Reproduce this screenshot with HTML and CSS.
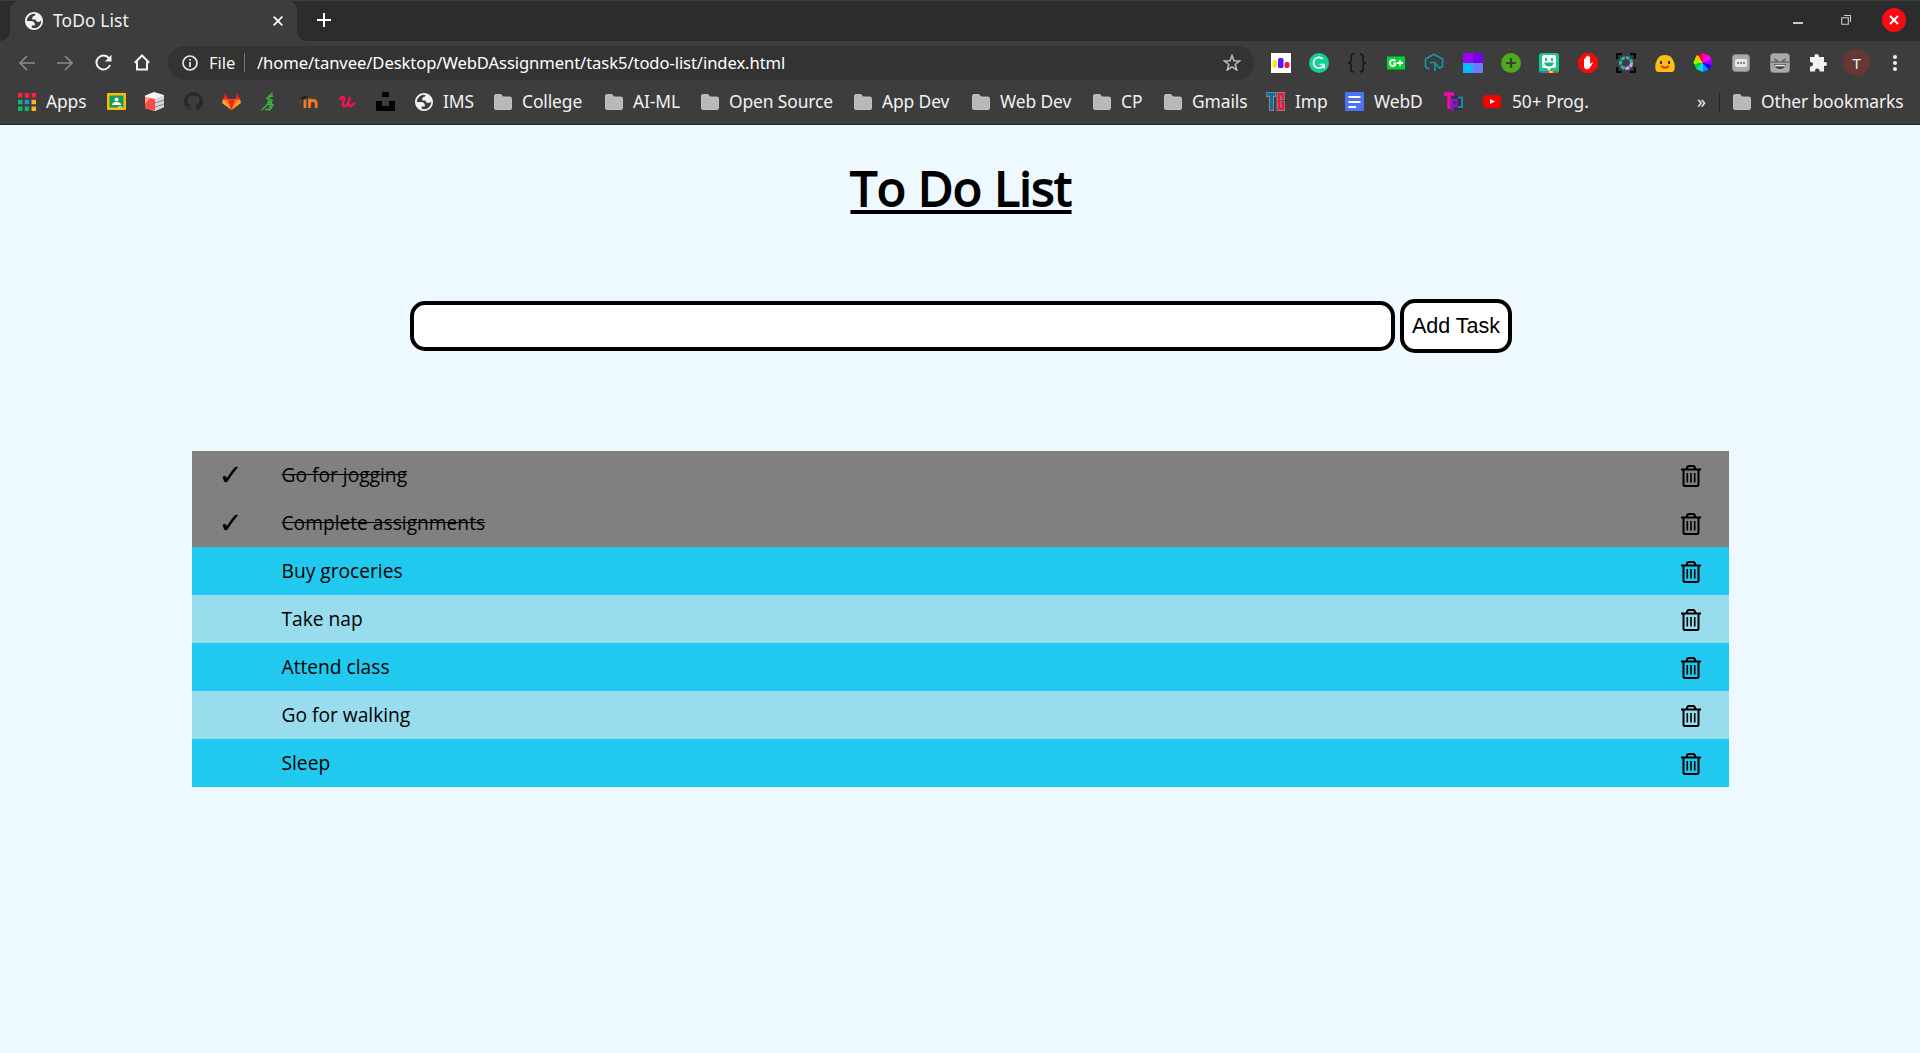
FILE: index.html
```html
<!DOCTYPE html>
<html lang="en">
<head>
<meta charset="utf-8">
<title>ToDo List</title>
<link rel="stylesheet" href="styles.css">
</head>
<body>
<svg class="defs" width="0" height="0" aria-hidden="true">
  <symbol id="folder" viewBox="0 0 18 16"><path d="M.5 2Q.5.5 2 .5h5L9 3h7q1.500 0 1.500 1.500V14q0 1.500-1.500 1.500H2Q.5 15.500.5 14z" fill="#b8b8b8" stroke="#d0d0d0" stroke-width=".8"/></symbol>
  <symbol id="globe" viewBox="2 2 20 20"><path fill="#f2f2f2" fill-rule="evenodd" d="M12 2C6.480 2 2 6.480 2 12s4.480 10 10 10 10-4.480 10-10S17.520 2 12 2zM4 12h4.400c3.407.022 4.922 1.730 4.543 5.127H9.488v2.470a8.004 8.004 0 0 0 10.498-8.083C19.327 12.504 18.332 13 17 13c-2.137 0-3.206-.916-3.206-2.750h-3.748c-.274-2.728.683-4.092 2.870-4.092 0-.975.327-1.597.811-1.970A8.004 8.004 0 0 0 4 12z"/></symbol>
  <symbol id="trash" viewBox="0 0 20 22"><path d="M0 4.500h20M5.500 4l1-2.200Q6.900 1 7.800 1h4.400q.9 0 1.300.8L14.500 4M2.500 5v14.500q0 1.500 1.500 1.500h12q1.500 0 1.500-1.500V5" fill="none" stroke="#000" stroke-width="2"/><path d="M6.300 8v9.500M10 8v9.500M13.700 8v9.500" stroke="#000" stroke-width="1.600"/></symbol>
</svg>
<header class="browser">
  <div class="tabs">
    <div class="edge"></div>
    <div class="tab">
      <svg class="i18"><use href="#globe"/></svg><span class="tab-title">ToDo List</span>
      <svg class="tab-close" viewBox="0 0 10 10"><path d="M.7.700l8.600 8.600M9.300.700.7 9.300" stroke="#fff" stroke-width="1.700"/></svg>
    </div>
    <div class="strip">
      <svg width="14" height="14"><path d="M7 0v14M0 7h14" stroke="#fff" stroke-width="2"/></svg>
      <div class="controls">
        <svg width="10" height="24"><path d="M0 15h10" stroke="#c8c8c8" stroke-width="2"/></svg>
        <svg width="10" height="10"><path d="M.7 2.700h6.600v6.600H.7zM3 .5h6.500V7" fill="none" stroke="#ccc" stroke-width="1.100"/></svg>
        <svg width="24" height="24"><circle cx="12" cy="12" r="12" fill="#f80b12"/><path d="m8 8 8 8m0-8-8 8" stroke="#fff" stroke-width="2"/></svg>
      </div>
    </div>
  </div>

  <div class="toolbar">
    <div class="nav">
      <svg width="16" height="16"><path d="M16 8H1.500M8 1 1 8l7 7" fill="none" stroke="#8a8a8a" stroke-width="1.600"/></svg>
      <svg width="16" height="16"><path d="M0 8h14.500M8 1l7 7-7 7" fill="none" stroke="#8a8a8a" stroke-width="1.600"/></svg>
      <svg width="17" height="17"><path d="M14 4.200A7 7 0 1 0 15 11" fill="none" stroke="#f2f2f2" stroke-width="2"/><path d="M16.500.8v6.700H9.800z" fill="#f2f2f2"/></svg>
      <svg width="16" height="17"><path d="M3 7.500V15.500h10V7.500M.8 8.700 8 1.500l7.200 7.200M1 8.300h2.500M12.500 8.300H15" fill="none" stroke="#f2f2f2" stroke-width="2"/></svg>
    </div>
    <div class="omnibox">
      <svg width="16" height="16"><circle cx="8" cy="8" r="7" fill="none" stroke="#e5e5e5" stroke-width="1.700"/><path d="M8 7v5M8 4v1.800" stroke="#e5e5e5" stroke-width="1.800"/></svg>
      <span class="scheme">File</span><i></i><span class="url">/home/tanvee/Desktop/WebDAssignment/task5/todo-list/index.html</span>
      <svg class="star" width="18" height="17"><path d="m9 1.500 2 5.200 5.500.3-4.300 3.500 1.500 5.400L9 12.900l-4.700 3 1.500-5.400L1.500 7 7 6.700z" fill="none" stroke="#bbb" stroke-width="1.600"/></svg>
    </div>
    <div class="extensions">
      <svg viewBox="0 0 20 20"><path fill="#fff" d="M0 0h20v20H0z"/><rect x="1.500" y="7" width="4.500" height="8" rx="2" fill="#f4ee20"/><rect x="7" y="5" width="5.500" height="10" rx="1.500" fill="#5d19ee"/><rect x="13.500" y="9" width="5" height="6" rx="2" fill="#ef1739"/></svg>
      <svg viewBox="0 0 20 20"><circle cx="10" cy="10" r="10" fill="#13cf96"/><path d="M13.700 6A5.400 5.400 0 1 0 15 11.500M10.500 11.500h4.700v4" fill="none" stroke="#fff" stroke-width="1.700"/></svg>
      <svg viewBox="0 0 20 20"><path d="M7 1Q4 1 4 4v3.500Q4 10 1 10q3 0 3 2.500V16q0 3 3 3M13 1q3 0 3 3v3.500q0 2.500 3 2.500-3 0-3 2.500V16q0 3-3 3" fill="none" stroke="#171717" stroke-width="1.600"/></svg>
      <svg viewBox="0 0 20 20"><path fill="#00d632" d="M1 3.500h18v13H1z"/><path d="M9.500 8Q8.500 7 7 7q-3 0-3 3t3 3q2.500 0 2.500-2.500H7.300M11 10h6M14 7v6" fill="none" stroke="#fff" stroke-width="1.800"/></svg>
      <svg viewBox="0 0 20 20"><path d="m5 16-3.500-2V6L10 1.200 18.500 6v7.500l-3 1.500-5-5.500M6 9.500h5V18" fill="none" stroke="#1599a8" stroke-width="1.600"/></svg>
      <svg viewBox="0 0 20 20"><path fill="#a000f5" d="M0 0h10v10H0z"/><path fill="#7600e8" d="M10 0h10v10H10z"/><path fill="#05baff" d="M0 10h10v10H0z"/><path fill="#6d7cff" d="M10 10h10v10H10z"/></svg>
      <svg viewBox="0 0 20 20"><circle cx="10" cy="10" r="10" fill="#50a81b"/><path d="M10 5v10M5 10h10" stroke="#31432c" stroke-width="2.200"/></svg>
      <svg viewBox="0 0 20 20"><rect width="20" height="20" rx="3" fill="#16c98c"/><path d="M1.500 19H6" stroke="#2c7de0" stroke-width="2"/><path d="M6 19h4" stroke="#e83e4c" stroke-width="2"/><path d="M10 19h4" stroke="#ffcb25" stroke-width="2"/><path d="M14 19h4" stroke="#e83e2c" stroke-width="2"/><path d="M5 2h10q2 0 2 2v9q0 2-2 2h-3l-2 3-2-3H5q-2 0-2-2V4q0-2 2-2z" fill="#fff"/><path fill="#16b982" d="M6 5h2v3H6zm6 0h2v3h-2zM5 9.500h10q-1 4-5 4t-5-4"/></svg>
      <svg viewBox="0 0 20 20"><path fill="#f80a0a" d="M6 0h8l6 6v8l-6 6H6l-6-6V6z"/><path d="M6 13V6q1-1 1.500 0V4q1-1 1.500 0V3q1-1 1.600 0V4q1-1 1.500 0v7l2-1.700q1.300 0 .6 1l-3.200 5q-1.500 1.500-4 .7Q6 15.500 6 13z" fill="#fff"/></svg>
      <svg viewBox="0 0 20 20"><path d="M1 6V1h5M14 1h5v5M19 14v5h-5M6 19H1v-5" fill="none" stroke="#080808" stroke-width="2.500"/><circle cx="10" cy="10" r="5.500" fill="none" stroke="#29b0b2" stroke-width="3" stroke-dasharray="4 1"/><path d="M15.500 10A5.500 5.500 0 0 1 8 15" fill="none" stroke="#c9a0e0" stroke-width="3" stroke-dasharray="4 1"/></svg>
      <svg viewBox="0 0 20 20"><path fill="#fdbd17" d="M1 18Q-1 12 2 7 4 2 10 2t8 5q3 5 1 11-1 1-3 1H4q-2 0-3-1z"/><path fill="#333" d="M5 8h2v3H5zm8 0h2v3h-2z"/><path d="M6 13q4 3.500 8 0" stroke="#e43427" stroke-width="2" fill="none"/></svg>
      <div class="wheel"></div>
      <svg viewBox="0 0 20 20"><rect x="1.500" y="1.500" width="17" height="17" rx="3" fill="#aaa" stroke="#888"/><rect x="4" y="6" width="12" height="8" rx="2" fill="#e8e8e8"/><path d="M6 10h8" stroke="#888" stroke-width="2" stroke-dasharray="2 1"/></svg>
      <svg viewBox="0 0 20 20"><rect x=".5" y=".5" width="19" height="19" rx="3" fill="#aaa" stroke="#888"/><path d="m4 6 4 2M16 6l-4 2M1 9h18" stroke="#666" stroke-width="1.500"/><path d="M4 11h12q-1 5-6 5t-6-5" fill="#444"/><path d="M5 12.500h10" stroke="#eee" stroke-width="1.500"/></svg>
      <svg viewBox="0 0 20 20"><path fill="#f2f2f2" d="M2 4h4.500Q6 1 8.500 1T11 4h5v5q3-.5 3 2t-3 2v5.500h-4.500q.3-3-2.200-3t-2.200 3H2v-5q3 .2 3-2.200T2 9z"/></svg>
      <div class="avatar">T</div>
      <svg viewBox="0 0 20 20"><g fill="#f2f2f2"><circle cx="10" cy="4" r="2"/><circle cx="10" cy="10" r="2"/><circle cx="10" cy="16" r="2"/></g></svg>
    </div>
  </div>

  <div class="bookmarks">
    <div><svg class="i18" viewBox="0 0 18 18"><path fill="#fb1f41" d="M0 0h4.500v4.500H0zM6.700 0h4.500v4.500H6.700zM13.500 0H18v4.500h-4.500z"/><path fill="#0cb965" d="M0 6.700h4.500v4.500H0zM0 13.500h4.500V18H0zM6.700 13.500h4.500V18H6.700z"/><path fill="#188ef5" d="M6.700 6.700h4.500v4.500H6.700z"/><path fill="#fdb616" d="M13.500 6.700H18v4.500h-4.500zM13.500 13.500H18V18h-4.500z"/></svg><span>Apps</span></div>
    <div><svg viewBox="0 0 19 19"><rect y="1" width="19" height="17" rx="1" fill="#f9bd05"/><path fill="#149e5b" d="M2.500 3.500h14v12h-14z"/><circle cx="9.500" cy="7.500" r="2" fill="#fff"/><path d="M5 13q0-3 4.500-3t4.500 3z" fill="#fff"/><path d="M11 15h4" stroke="#fff"/></svg></div>
    <div><svg viewBox="0 0 19 19"><path fill="#f4f4f4" d="m0 3.500 9-3.500 10 3v12l-9 4-10-3z"/><path fill="#d5d5d5" d="M10 7 19 3v12l-9 4z"/><path fill="#ff4a45" d="m0 5 10 2v12L0 16z"/><path fill="#ff9a80" d="m0 5 5 1-5 6z"/><path d="m10 11 9-3M10 15l9-3" stroke="#888" fill="none"/></svg></div>
    <div><svg viewBox="0 0 19 19"><path fill="#24292e" d="M6.500 18.300C3 17 0 13.700 0 9.500a9.500 9.500 0 0 1 19 0c0 4.200-3 7.500-6.500 8.800v-3.500q0-1.300-.8-2 4-.5 4-4.500 0-1.500-1-2.600.4-1.200-.1-2.500-1.200 0-2.700 1-2.400-.7-4.800 0-1.500-1-2.700-1-.5 1.300-.1 2.500-1 1.100-1 2.600 0 4 4 4.500-.7.700-.8 1.700-2 .7-3-1-1-1.200-1.500-.5 1 .5 1.500 2 1 1.500 3 1z"/></svg></div>
    <div><svg viewBox="0 0 19 19"><path fill="#fca326" d="M1 7h17l1 4-9.500 7L0 11z"/><path fill="#fc6d26" d="M2 7h15L9.500 18z"/><path fill="#f0251c" d="m1 7.500 2.500-6.500L6 7.500zM13 7.500 15.500 1 18 7.500zM6 7.500h7L9.500 18z"/></svg></div>
    <div><svg viewBox="0 0 19 19"><path d="M12.500 1 7 6.500l5 1.500-5 5-5.500 5M8 5l5-1M9 8l-1 4 5 1-3 4.500H5M12 10l-3 6" fill="none" stroke="#3eb83b" stroke-width="1.500"/></svg></div>
    <div><svg viewBox="0 0 19 19"><path d="m0 6 5-2 4 0-4 4z" fill="#24201e"/><path d="M1.300 7v5" stroke="#6b4630"/><path d="M6 7.500V16M10.500 16V6.500M10.500 11q0-2.500 3.300-2.500T17.200 11v5" fill="none" stroke="#f27b22" stroke-width="2.800"/></svg></div>
    <div><svg viewBox="0 0 19 19"><path d="M2 7q4-4 4 0l-1 4q-.5 4 2 3.300 3-1 5-9.300l-1.400 6q-.5 3.500 2 3 2-.5 3.500-2.500" fill="none" stroke="#ed1651" stroke-width="2.600" stroke-linecap="round"/></svg></div>
    <div><svg viewBox="0 0 19 19"><path d="M6 0h7v5H6zM0 9h6v5h7V9h6v10H0z"/></svg></div>
    <div><svg class="i18"><use href="#globe"/></svg><span>IMS</span></div>
    <div><svg class="folder"><use href="#folder"/></svg><span>College</span></div>
    <div><svg class="folder"><use href="#folder"/></svg><span>AI-ML</span></div>
    <div><svg class="folder"><use href="#folder"/></svg><span>Open Source</span></div>
    <div><svg class="folder"><use href="#folder"/></svg><span>App Dev</span></div>
    <div><svg class="folder"><use href="#folder"/></svg><span>Web Dev</span></div>
    <div><svg class="folder"><use href="#folder"/></svg><span>CP</span></div>
    <div><svg class="folder"><use href="#folder"/></svg><span>Gmails</span></div>
    <div><svg viewBox="0 0 19 19"><path fill="#888" d="M0 0h10v5H8v14H3V5H0zM10.500 0H19v8h-4v1h4v10h-8.500z"/><path fill="#086fa6" d="M.7.700h8.500v3H7V18H4V3.700H.7z"/><path d="M17 7V2.300h-4v14.400h4V11h-2" fill="none" stroke="#ef1740" stroke-width="2.600"/></svg><span>Imp</span></div>
    <div><svg viewBox="0 0 19 19"><rect width="19" height="19" rx="1" fill="#4b74f5"/><path d="M3.500 5h12M3.500 10h12M3.500 15H11" stroke="#fff" stroke-width="2"/></svg><span>WebD</span></div>
    <div><svg viewBox="0 0 19 19"><path d="M8 4h10v14H8z" fill="#343039"/><path d="M0 2h10M5 2v15" stroke="#f408ad" stroke-width="3.500"/><path d="M8.500 19V8h4v6h-3" stroke="#8a14d0" stroke-width="2.400" fill="none"/><path d="M14 5.500h4V15h-4" stroke="#168d9e" stroke-width="2" fill="none"/></svg></div>
    <div><svg viewBox="0 0 19 19"><rect y="3" width="18" height="13" rx="3" fill="#f80000"/><path fill="#fff" d="m7 7 5 2.500L7 12z"/></svg><span>50+ Prog.</span></div>
    <div class="more">»</div>
    <div class="other"><svg class="folder"><use href="#folder"/></svg><span>Other bookmarks</span></div>
  </div>
</header>

<main>
  <h1>To Do List</h1>
  <form class="entry"><input type="text" aria-label="Task"><button type="button">Add Task</button></form>
  <ul class="tasks">
    <li class="done"><b>✓</b><span>Go for jogging</span><svg><use href="#trash"/></svg></li>
    <li class="done"><b>✓</b><span>Complete assignments</span><svg><use href="#trash"/></svg></li>
    <li><b></b><span>Buy groceries</span><svg><use href="#trash"/></svg></li>
    <li><b></b><span>Take nap</span><svg><use href="#trash"/></svg></li>
    <li><b></b><span>Attend class</span><svg><use href="#trash"/></svg></li>
    <li><b></b><span>Go for walking</span><svg><use href="#trash"/></svg></li>
    <li><b></b><span>Sleep</span><svg><use href="#trash"/></svg></li>
  </ul>
</main>
</body>
</html>
```
FILE: styles.css
```css
* { box-sizing: border-box; }
html, body { height: 100%; overflow: hidden; }
body { margin: 0; background: #edf9ff; font-family: "Open Sans", sans-serif; color: #000; }
svg { display: block; flex: none; }
.defs { position: absolute; }

/* Browser window */
.browser { height: 125px; background: #3d3d3d; border-bottom: 1px solid #202326; color: #f2f2f2; font-family: "Noto Sans", sans-serif; font-size: 17.400px; letter-spacing: -.1px; white-space: nowrap; }
.tabs { height: 41px; display: flex; border-top: 1px solid #3d3d3d; }
.edge { width: 10px; background: #2c2c2c; border-bottom-right-radius: 10px; }
.tab { width: 287px; position: relative; display: flex; align-items: center; padding: 0 14px 1px 15px; }
.tab::before { content: ""; position: absolute; inset: 0 0 auto; height: 10px; z-index: 0; background: radial-gradient(circle at 10px 10px, transparent 10px, #2c2c2c 10.500px) left / 10px 10px no-repeat, radial-gradient(circle at 0 10px, transparent 10px, #2c2c2c 10.500px) right / 10px 10px no-repeat; }
.i18 { width: 18px; height: 18px; }
.tab-title { margin: 0 0 2px 10px; letter-spacing: .1px; }
.tab-close { width: 10px; height: 10px; margin-left: auto; }
.strip { flex: 1; display: flex; align-items: center; padding: 0 14px 2px 20px; background: #2c2c2c; border-bottom-left-radius: 10px; }
.controls { margin-left: auto; display: flex; align-items: center; gap: 38px; }
.controls svg:last-child { margin-left: -7px; }
.toolbar { height: 43px; display: flex; align-items: center; }
.nav { width: 168px; display: flex; align-items: center; gap: 22px; padding-left: 19px; }
.omnibox { width: 1086px; height: 34px; border-radius: 17px; background: #333; display: flex; align-items: center; padding: 0 13px 0 14px; font-size: 16.600px; letter-spacing: -.08px; }
.scheme { width: 27px; margin-left: 11px; }
.omnibox i { width: 1px; height: 19px; background: #777; margin: 0 12px 0 8px; }
.url { color: #fff; }
.star { margin-left: auto; }
.extensions { display: grid; grid-template-columns: repeat(17, 38.400px); justify-items: center; align-items: center; margin-left: 7.500px; }
.extensions svg { width: 20px; height: 20px; }
.wheel { width: 19px; height: 19px; clip-path: polygon(50% 0, 85% 15%, 100% 50%, 85% 85%, 50% 100%, 15% 85%, 0 50%, 15% 15%); background: conic-gradient(#f0a 0 30deg, #f0f 0 70deg, #90f 0 105deg, #20f 0 140deg, #08f 0 180deg, #0dd 0 220deg, #0d2 0 260deg, #9f0 0 300deg, #fb0 0 330deg, #f01 0); }
.avatar { width: 27px; height: 27px; border-radius: 50%; background: #663833; display: grid; place-items: center; font-size: 15px; }
.bookmarks { height: 36px; display: grid; align-items: center; padding-left: 18px; grid-template-columns: 89px 38px 39px 38px 38px 39px 39px 38px 39px 79px 111px 96px 153px 118px 121px 71px 102px 79px 99px 39px 214px 22px 1fr; }
.bookmarks > div { display: flex; align-items: center; }
.bookmarks svg { width: 19px; height: 19px; margin-top: -1px; }
.bookmarks svg.i18 { width: 18px; height: 18px; }
.bookmarks svg.folder { width: 18px; height: 16px; }
.bookmarks span { margin: -3px 0 0 10px; }
.bookmarks .more { margin-top: -3px; }
.bookmarks .other { height: 19px; border-left: 1px solid #222; padding-left: 13px; }

/* To-do page */
main { display: flex; flex-direction: column; align-items: center; }
h1 { margin: 28px 0 0 2px; height: 148px; font-size: 48px; line-height: 70px; font-weight: 400; -webkit-text-stroke: 2px #000; text-decoration: underline; text-decoration-thickness: 4px; text-underline-offset: 4px; text-decoration-skip-ink: none; }
.entry { display: flex; align-items: center; gap: 5px; height: 50px; padding-left: 2px; }
.entry input { width: 985px; height: 50px; border: 4px solid #000; border-radius: 15px; background: #fff; }
.entry button { width: 112px; height: 54px; border: 4px solid #000; border-radius: 15px; background: #fff; padding: 0; font: 21.500px "Liberation Sans", sans-serif; }
.tasks { width: 1537px; margin: 100px 0 0; padding: 0; list-style: none; }
.tasks li { height: 48px; display: flex; align-items: center; padding: 0 28px 0 27px; background: #22c9ef; font-size: 19.200px; }
.tasks li:nth-child(even) { background: #99dced; }
.tasks li.done { background: #808080; }
.tasks span { margin-top: -2px; }
.done span { text-decoration: line-through; }
.tasks b { width: 63px; font: 29px "DejaVu Sans", sans-serif; }
.tasks svg { width: 20px; height: 22px; margin: 2px 0 0 auto; }
```
